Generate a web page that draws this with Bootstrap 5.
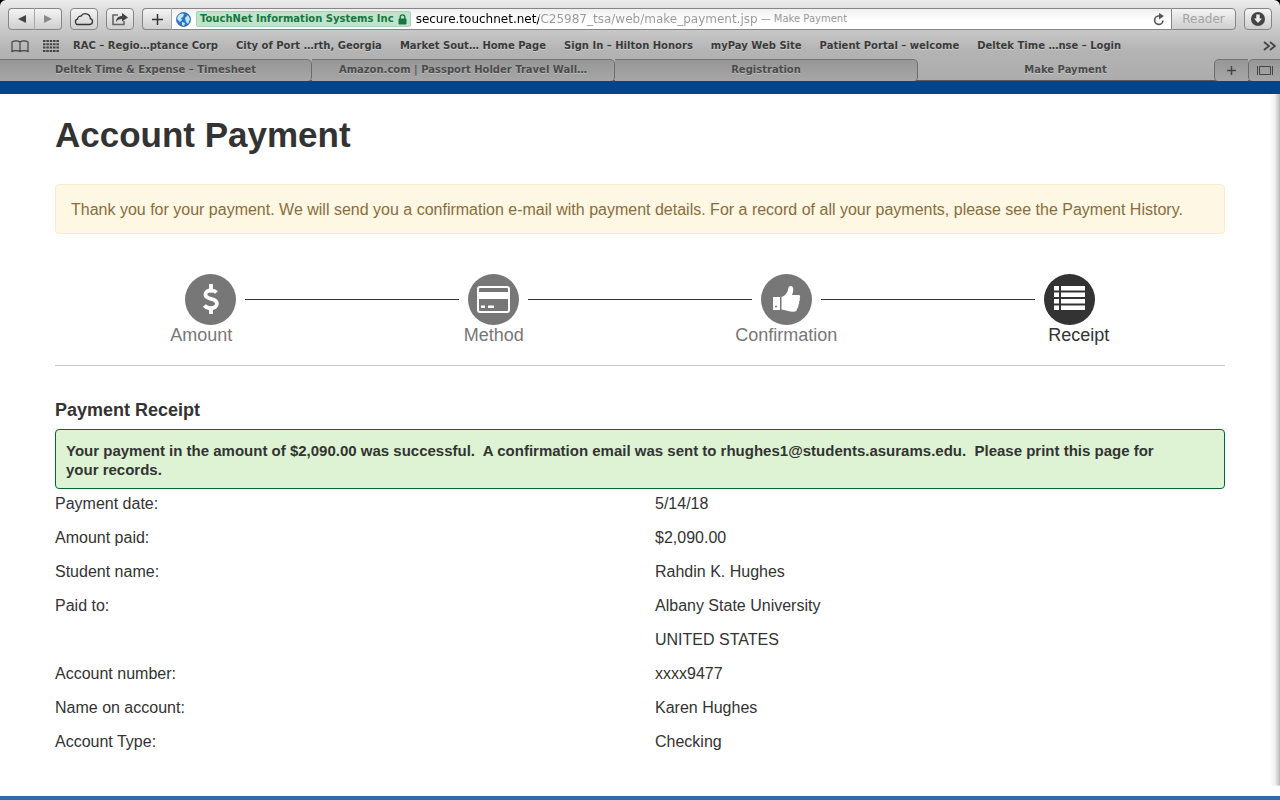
<!DOCTYPE html>
<html lang="en">
<head>
<meta charset="utf-8">
<meta name="viewport" content="width=device-width, initial-scale=1">
<title>Make Payment</title>
<link href="https://cdn.jsdelivr.net/npm/bootstrap@5.3.0/dist/css/bootstrap.min.css" rel="stylesheet">
<style>
  body { background: #fff; color: #333; font-family: "Liberation Sans", Arial, sans-serif; font-size: 16px; line-height: 20px; }
  a { color: inherit; text-decoration: none; }

  /* Browser window frame */
  .window-frame { background: #000; }
  .chrome { font-family: "DejaVu Sans", sans-serif; font-size: 10px; line-height: 16px; color: #3a3a3a; background: linear-gradient(#ececec, #d2d2d2 20px, #b4b4b4 50px, #acacac); border-radius: 6px 6px 0 0; text-shadow: 0 1px 0 rgba(255,255,255,.35); }
  .toolbar { padding: 8px 8px 0; }
  .tool-btn { height: 22px; padding: 0; border: 1px solid #868686; border-radius: 4px; background: linear-gradient(#f4f4f4, #cfcfcf); color: #444; display: flex; align-items: center; justify-content: center; }
  .w-tool { width: 28px; }
  .w-nav { width: 27px; }
  .w-add { width: 30px; }
  .w-reader { width: 65px; }
  .tool-btn.start { border-radius: 4px 0 0 4px; border-right-color: #aaa; }
  .tool-btn.end { border-radius: 0 4px 4px 0; }
  .tool-btn.back-end { border-left: 0; }
  .reader { color: #a3a3a3; font-size: 12px; }
  .address { height: 22px; background: linear-gradient(#f0f0f0, #fff 12px); border: solid #868686; border-width: 1px 0; padding: 0 6px 0 4px; text-shadow: none; min-width: 0; }
  .cert { background: #bfe3cd; border: 1px solid #a3d4b6; border-radius: 2px; color: #17763f; font-weight: 700; height: 16px; line-height: 14px; padding: 0 3px; margin: 0 5px; white-space: nowrap; }
  .url { width: 345px; border: 0; padding: 0; outline: 0; font-size: 12px; line-height: 16px; color: #8c8c8c; background: linear-gradient(90deg, #000 123px, #979797 123px); -webkit-background-clip: text; background-clip: text; -webkit-text-fill-color: transparent; }
  .page-name { color: #979797; white-space: nowrap; }
  .bookmarks { padding: 3px 4px 0 11px; height: 29px; font-weight: 700; gap: 14px; }
  .bookmark-links { gap: 18px; }
  .bookmarks a { white-space: nowrap; }
  .tabs { height: 22px; font-weight: 700; color: #4a4a4a; border-bottom: 1px solid #5b5b5b; }
  .tab-link { flex: 1 1 8px; min-width: 0; height: 22px; line-height: 20px; text-align: center; white-space: nowrap; overflow: hidden; border-top: 1px solid #747474; border-right: 1px solid #6c6c6c; border-radius: 0 5px 4px 0; background: linear-gradient(#979797, #a6a6a6); }
  .tab-link:first-child { flex-basis: 17px; }
  .tab-link.current { flex-basis: 0; border-color: transparent; background: none; }
  .tab-btn { height: 22px; padding: 0; border: 0; border-top: 1px solid #747474; border-left: 1px solid #6c6c6c; border-radius: 5px 0 0 4px; background: linear-gradient(#979797, #a6a6a6); display: flex; align-items: center; justify-content: center; }
  .w-plus { width: 34px; }
  .w-all { width: 32px; }

  /* Payment page */
  .page { background: linear-gradient(90deg, rgba(0,0,0,0), rgba(0,0,0,.06) 5px, rgba(0,0,0,.28)) right top / 10px 98% no-repeat; }
  .brand-bar { height: 13px; background: #04448a; }
  .foot-bar { height: 4px; background: #3369aa; }
  .content { max-width: 1200px; padding: 21px 15px 44px; }
  h1 { font-size: 35px; line-height: 40px; font-weight: 700; margin: 0 0 29px; }
  .notice { background: #fef7e4; border: 1px solid #fbebcb; border-radius: 4px; color: #8a6d3b; padding: 15px 15px 13px; margin: 0 0 40px; }
  .track { padding: 0 130px; gap: 9px; }
  .step-dot { width: 51px; height: 51px; flex: none; border-radius: 50%; background: #777; }
  .step-dot.on { background: #333; }
  .step-line { flex: 1 1 0; height: 1px; background: #333; }
  .step-line.mid { flex-basis: 9px; }
  .steps { font-size: 18px; line-height: 20px; color: #777; text-align: center; border-bottom: 1px solid #ccc; padding-bottom: 20px; margin-bottom: 34px; }
  .steps .on { color: #333; }
  h2 { font-size: 18px; line-height: 20px; font-weight: 700; margin: 0 0 9px; }
  .success { background: #ddf3d3; border: 1px solid #006b2d; border-radius: 4px; font-size: 15px; font-weight: 700; line-height: 19px; padding: 11px 10px 9px; margin: 0 0 5px; }
  .receipt { --bs-gutter-x: 30px; row-gap: 14px; }
  .receipt dt, .receipt dd { font-weight: 400; margin-bottom: 0; }
</style>
</head>
<body>
<div class="window-frame">
<header class="chrome">
  <div class="toolbar d-flex align-items-center">
    <button class="tool-btn start w-nav" aria-label="Back"><svg width="10" height="10"><path d="M9 1v8L1 5z" fill="#444"/></svg></button>
    <button class="tool-btn end back-end w-nav me-2" aria-label="Forward"><svg width="10" height="10"><path d="M1 1v8l8-4z" fill="#888"/></svg></button>
    <button class="tool-btn w-tool me-2" aria-label="iCloud tabs"><svg width="20" height="14" viewBox="0 0 20 14" fill="none" stroke="#333" stroke-width="1.3"><path d="M4.500 12.500h11a3 3 0 0 0 .8-5.900A5 5 0 0 0 7 4.200a3 3 0 0 0-3.500 3A2.700 2.700 0 0 0 4.500 12.500z"/></svg></button>
    <button class="tool-btn w-tool me-2" aria-label="Share"><svg width="18" height="14" viewBox="0 0 18 14" fill="none" stroke="#666" stroke-width="1.600"><path d="M7 3H2v9.500h11V9"/><path d="M5 10c0-4 3-6 6-6V1l6 4.500-6 4V7C8 7 6 8 5 10z" fill="#444" stroke="none"/></svg></button>
    <button class="tool-btn start w-add" aria-label="Add bookmark"><svg width="11" height="11"><path d="M5.500 0v11M0 5.500h11" stroke="#333" stroke-width="1.500"/></svg></button>
    <div class="address d-flex align-items-center flex-grow-1">
      <svg width="15" height="15" viewBox="0 0 15 15" aria-hidden="true"><circle cx="7.500" cy="7.500" r="7" fill="#2d76c8" stroke="#1c5698" stroke-width=".7"/><path d="M2 4c2-3 5-3 6-2L7 5 5 6l1 2-2 2-3-3zM9 6l3-3 2 4-2 5-2-2zM6 10l3 1-1 3-2-1z" fill="#c7e6fb"/></svg>
      <span class="cert d-flex align-items-center">TouchNet Information Systems Inc<svg class="ms-1" width="9" height="11" viewBox="0 0 9 11" aria-hidden="true"><path d="M2.200 5V3.200a2.300 2.300 0 0 1 4.600 0V5" fill="none" stroke="#17763f" stroke-width="1.400"/><rect x=".5" y="4.500" width="8" height="6" rx="1" fill="#17763f"/></svg></span>
      <input class="url" type="text" aria-label="Address" value="secure.touchnet.net/C25987_tsa/web/make_payment.jsp">
      <span class="page-name">— Make Payment</span>
      <svg class="ms-auto" width="12" height="13" viewBox="0 0 12 13" role="img" aria-label="Reload"><path d="M10 7.500A4.200 4.200 0 1 1 6 3" fill="none" stroke="#555" stroke-width="1.600"/><path d="M6 0l5 3-5 3.500z" fill="#555"/></svg>
    </div>
    <button class="tool-btn end reader w-reader me-2">Reader</button>
    <button class="tool-btn w-tool" aria-label="Downloads"><svg width="16" height="16" viewBox="0 0 16 16"><circle cx="8" cy="8" r="7" fill="#444"/><path d="M6.300 3.500h3.400v4H12L8 12 4 7.500h2.300z" fill="#eee"/></svg></button>
  </div>
  <nav class="bookmarks d-flex align-items-center" aria-label="Bookmarks">
    <svg width="18" height="13" viewBox="0 0 18 13" fill="none" stroke="#444" stroke-width="1.200"><path d="M9 2C7 .5 3 .5 1 2v9.500c2-1.200 6-1.200 8 0 2-1.200 6-1.200 8 0V2C15 .5 11 .5 9 2zM9 2v9.500"/></svg>
    <svg width="16" height="12" viewBox="0 0 16 12"><path d="M0 1h16M0 4.300h16M0 7.600h16M0 11h16" stroke="#444" stroke-width="2" stroke-dasharray="2.500 .85"/></svg>
    <div class="bookmark-links d-flex">
      <a href="#">RAC – Regio…ptance Corp</a>
      <a href="#">City of Port …rth, Georgia</a>
      <a href="#">Market Sout… Home Page</a>
      <a href="#">Sign In – Hilton Honors</a>
      <a href="#">myPay Web Site</a>
      <a href="#">Patient Portal – welcome</a>
      <a href="#">Deltek Time …nse – Login</a>
    </div>
    <svg class="ms-auto" width="13" height="10" viewBox="0 0 13 10" fill="none" stroke="#444" stroke-width="1.800"><path d="M1 1l5 4-5 4M7 1l5 4-5 4"/></svg>
  </nav>
  <nav class="tabs d-flex" aria-label="Tabs">
    <a class="tab-link" href="#">Deltek Time &amp; Expense – Timesheet</a>
    <a class="tab-link" href="#">Amazon.com | Passport Holder Travel Wall…</a>
    <a class="tab-link" href="#">Registration</a>
    <a class="tab-link current" href="#" aria-current="page">Make Payment</a>
    <button class="tab-btn w-plus" aria-label="New tab"><svg width="9" height="9"><path d="M4.500 0v9M0 4.500h9" stroke="#444" stroke-width="1.500"/></svg></button>
    <button class="tab-btn w-all" aria-label="Show all tabs"><svg width="16" height="9" fill="none" stroke="#444"><path d="M.5 0v9M15.500 0v9M2.500.5h11v8h-11z"/></svg></button>
  </nav>
</header>
</div>

<div class="page">
  <div class="brand-bar"></div>
  <main class="content mx-auto">
    <h1>Account Payment</h1>
    <p class="notice">Thank you for your payment. We will send you a confirmation e-mail with payment details. For a record of all your payments, please see the Payment History.</p>

    <section class="steps" aria-label="Payment steps">
      <div class="track d-flex align-items-center">
        <svg class="step-dot" viewBox="0 0 51 51"><path d="M31.500 18.500c-1.200-1.300-3-2-5.500-2-3.300 0-5.600 1.600-5.600 4.100 0 5.800 11.500 2.700 11.500 9 0 2.800-2.400 4.600-6 4.600-2.700 0-5-.9-6.500-2.700M26 10v6M26 34v6" fill="none" stroke="#fff" stroke-width="3.800"/></svg>
        <span class="step-line"></span>
        <svg class="step-dot" viewBox="0 0 51 51"><rect x="10" y="13" width="31" height="25" rx="2" fill="none" stroke="#fff" stroke-width="2"/><path d="M11 18h29v7H11zM13 31.500h4v2.500h-4zM20 31.500h6v2.500h-6z" fill="#fff"/></svg>
        <span class="step-line mid"></span>
        <svg class="step-dot" viewBox="0 0 51 51"><path d="M12 23h7v13h-7zM20.500 23c3-1 6-4 6.500-7 .3-2 .7-4 2.500-4 3.500 0 3.300 5 1.500 9h6.500c2 0 2 2.500 1 3 .8 1.500.3 3-.5 3.500.5 1.500 0 3-.7 3.500.3 2-.5 3-1.200 3.500 0 2-1.300 3.300-3.600 3.300-5 0-8-1.800-12-2.300z" fill="#fff"/><circle cx="15" cy="32.500" r="1" fill="#777"/></svg>
        <span class="step-line"></span>
        <svg class="step-dot on" viewBox="0 0 51 51"><path d="M10 12h5v4.500h-5zm7 0h24v4.500H17zM10 18.500h5V23h-5zm7 0h24V23H17zM10 25h5v4.500h-5zm7 0h24v4.500H17zM10 31.500h5V36h-5zm7 0h24V36H17z" fill="#fff"/></svg>
      </div>
      <div class="row g-0">
        <div class="col-3">Amount</div>
        <div class="col-3">Method</div>
        <div class="col-3">Confirmation</div>
        <div class="col-3 on">Receipt</div>
      </div>
    </section>

    <h2>Payment Receipt</h2>
    <p class="success">Your payment in the amount of $2,090.00 was successful.&nbsp; A confirmation email was sent to rhughes1@students.asurams.edu.&nbsp; Please print this page for<br>your records.</p>
    <dl class="row receipt mb-0">
      <dt class="col-6">Payment date:</dt><dd class="col-6">5/14/18</dd>
      <dt class="col-6">Amount paid:</dt><dd class="col-6">$2,090.00</dd>
      <dt class="col-6">Student name:</dt><dd class="col-6">Rahdin K. Hughes</dd>
      <dt class="col-6">Paid to:</dt><dd class="col-6">Albany State University</dd>
      <dd class="col-6 offset-6">UNITED STATES</dd>
      <dt class="col-6">Account number:</dt><dd class="col-6">xxxx9477</dd>
      <dt class="col-6">Name on account:</dt><dd class="col-6">Karen Hughes</dd>
      <dt class="col-6">Account Type:</dt><dd class="col-6">Checking</dd>
    </dl>
  </main>
  <footer class="foot-bar"></footer>
</div>
<script src="https://cdn.jsdelivr.net/npm/bootstrap@5.3.0/dist/js/bootstrap.bundle.min.js"></script>
</body>
</html>
